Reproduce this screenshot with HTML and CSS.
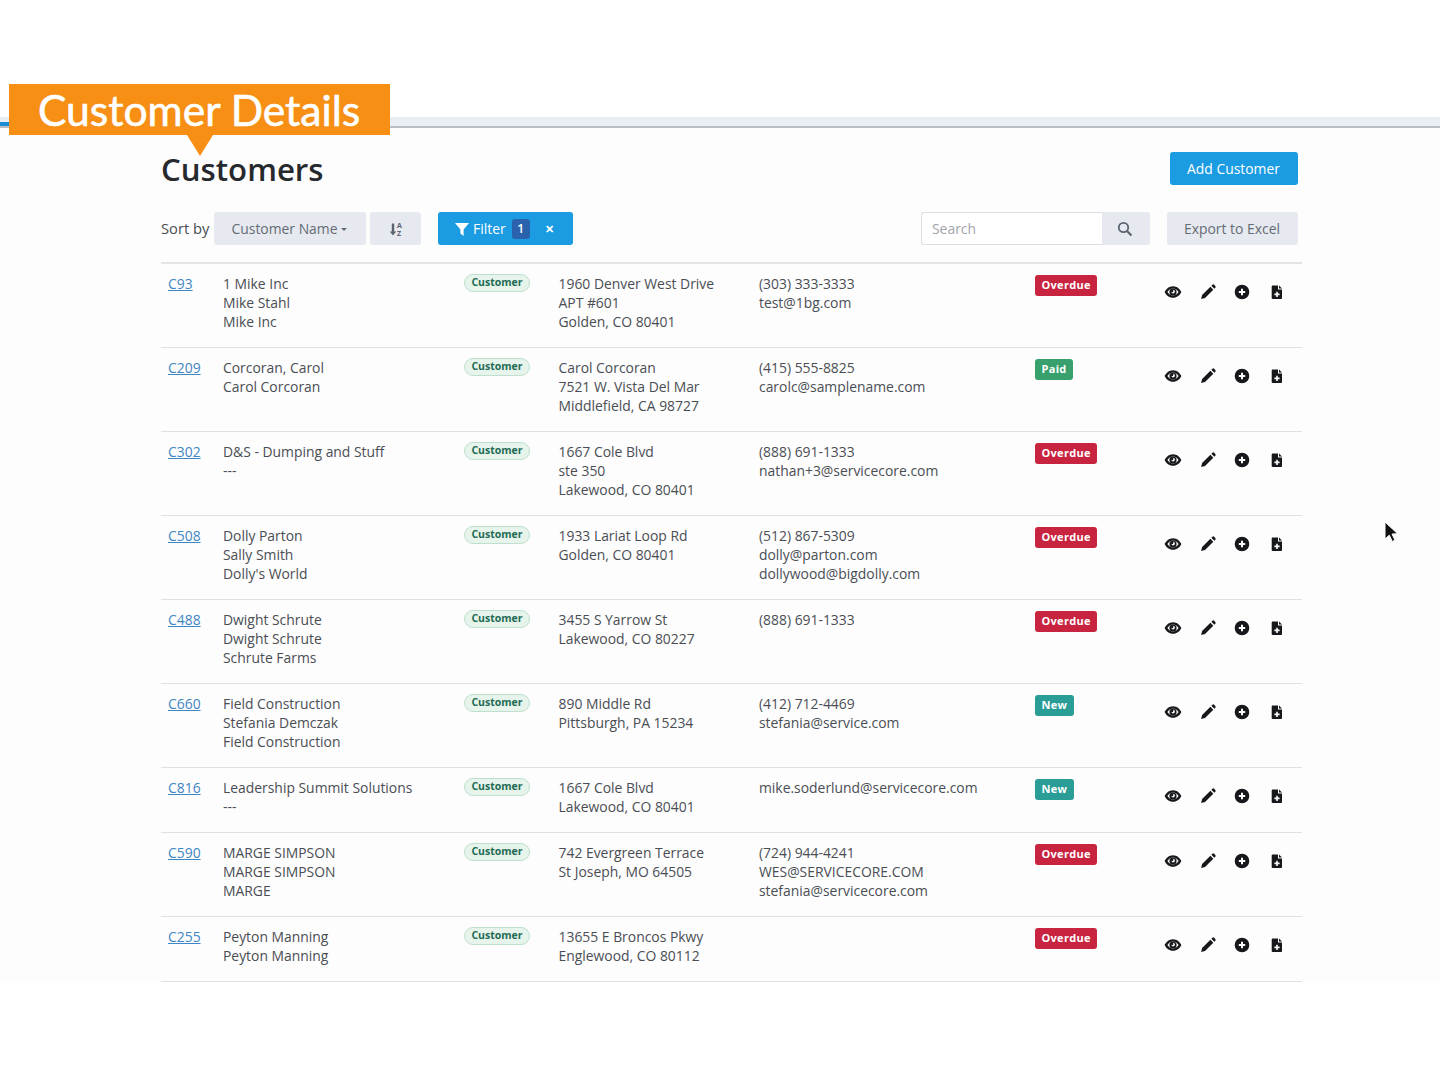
FILE: index.html
```html
<!DOCTYPE html>
<html lang="en">
<head>
<meta charset="utf-8">
<title>Customers</title>
<link rel="stylesheet" href="styles.css">
</head>
<body>
<svg class="defs" width="0" height="0" aria-hidden="true">
  <symbol id="i-eye" viewBox="0 0 18 18"><path fill-rule="evenodd" d="M9 3.200C5 3.200 2 6 .6 9c1.400 3 4.400 5.800 8.400 5.800s7-2.800 8.400-5.800C16 6 13 3.200 9 3.200zm0 2.200c2.400 0 4.500 1.700 5.600 3.600-1.100 1.900-3.200 3.600-5.600 3.600S4.500 10.900 3.400 9C4.500 7.100 6.600 5.400 9 5.400z"/><path fill-rule="evenodd" d="M9 5.400a3.600 3.600 0 1 0 0 7.200 3.600 3.600 0 0 0 0-7.200zm-.2 1.700a1.100 1.100 0 1 1-1.500 1.500c.1 1 .800 1.900 1.700 1.900a1.900 1.900 0 0 0 0-3.800z"/></symbol>
  <symbol id="i-pencil" viewBox="0 0 18 18"><path d="M11.400 3.800l2.900 2.900-8.300 8.300-3.900 1 1-3.900zM12.400 2.800l1-1a1.300 1.300 0 0 1 1.800 0l1.100 1.100a1.300 1.300 0 0 1 0 1.800l-1 1z"/></symbol>
  <symbol id="i-plus" viewBox="0 0 18 18"><path fill-rule="evenodd" d="M9 1.700a7.300 7.300 0 1 0 0 14.600A7.300 7.300 0 0 0 9 1.700zm-1 4.100h2V8h2.200v2H10v2.200H8V10H5.800V8H8z"/></symbol>
  <symbol id="i-file" viewBox="0 0 18 18"><path fill-rule="evenodd" d="M4.800 2.500h5.200v4h4v8.400c0 .6-.5 1.100-1.100 1.100H4.800c-.6 0-1.100-.5-1.100-1.100V3.600c0-.6.500-1.100 1.100-1.100zm3.400 6.300v1.800H6.400v1.600h1.800V14h1.600v-1.800h1.800v-1.600H9.800V8.800zM11 2.500l3 3h-3z"/></symbol>
</svg>

<div class="blank-top"></div>
<div class="callout">Customer Details</div>
<svg class="cursor" width="16" height="24" viewBox="0 0 16 24" aria-hidden="true"><path d="M2 1v17l4.300-3.800 3 6.300 2.700-1.300-3-6.100 5.600-.4z" fill="#111" stroke="#fff" stroke-width="1"/></svg>

<main class="app">
  <div class="app-bar"></div>
  <div class="content">
    <header class="title-row">
      <h1 class="title">Customers</h1>
      <button class="btn btn-primary btn-add">Add Customer</button>
    </header>
    <div class="toolbar">
      <div class="toolbar-left">
        <span class="sort-label">Sort by</span>
        <button class="btn btn-muted btn-sort">Customer Name<span class="caret"></span></button>
        <button class="btn btn-muted btn-order" aria-label="Sort order">
          <svg width="16" height="16" viewBox="0 0 16 16"><path d="M3.800 2.500h2.400v8h2l-3.200 4-3.200-4h2z" fill="#5b6470"/><text x="9" y="7.200" class="az">A</text><text x="9" y="14.500" class="az">Z</text></svg>
        </button>
        <button class="btn btn-primary btn-filter">
          <svg width="14" height="14" viewBox="0 0 14 14"><path d="M0 1h14L8.600 7.500V14L5.400 11.500V7.500z" fill="#fff"/></svg>
          <span>Filter</span><span class="count">1</span><span class="close">✕</span>
        </button>
      </div>
      <div class="toolbar-right">
        <div class="search">
          <input class="search-input" type="text" placeholder="Search">
          <button class="btn-search" aria-label="Search">
            <svg width="16" height="16" viewBox="0 0 16 16"><circle cx="6.500" cy="6.500" r="4.700" fill="none" stroke="#5b6470" stroke-width="1.800"/><path d="M10 10l4.500 4.500" stroke="#5b6470" stroke-width="2.200"/></svg>
          </button>
        </div>
        <button class="btn btn-muted btn-export">Export to Excel</button>
      </div>
    </div>

    <div class="rows">
      <div class="row">
        <a class="id" href="#">C93</a>
        <div>1 Mike Inc<br>Mike Stahl<br>Mike Inc</div>
        <div><span class="pill">Customer</span></div>
        <div>1960 Denver West Drive<br>APT #601<br>Golden, CO 80401</div>
        <div>(303) 333-3333<br>test@1bg.com</div>
        <div><span class="status overdue">Overdue</span></div>
        <div class="actions"><svg><use href="#i-eye"/></svg><svg><use href="#i-pencil"/></svg><svg><use href="#i-plus"/></svg><svg><use href="#i-file"/></svg></div>
      </div>
      <div class="row">
        <a class="id" href="#">C209</a>
        <div>Corcoran, Carol<br>Carol Corcoran</div>
        <div><span class="pill">Customer</span></div>
        <div>Carol Corcoran<br>7521 W. Vista Del Mar<br>Middlefield, CA 98727</div>
        <div>(415) 555-8825<br>carolc@samplename.com</div>
        <div><span class="status paid">Paid</span></div>
        <div class="actions"><svg><use href="#i-eye"/></svg><svg><use href="#i-pencil"/></svg><svg><use href="#i-plus"/></svg><svg><use href="#i-file"/></svg></div>
      </div>
      <div class="row">
        <a class="id" href="#">C302</a>
        <div>D&amp;S - Dumping and Stuff<br>---</div>
        <div><span class="pill">Customer</span></div>
        <div>1667 Cole Blvd<br>ste 350<br>Lakewood, CO 80401</div>
        <div>(888) 691-1333<br>nathan+3@servicecore.com</div>
        <div><span class="status overdue">Overdue</span></div>
        <div class="actions"><svg><use href="#i-eye"/></svg><svg><use href="#i-pencil"/></svg><svg><use href="#i-plus"/></svg><svg><use href="#i-file"/></svg></div>
      </div>
      <div class="row">
        <a class="id" href="#">C508</a>
        <div>Dolly Parton<br>Sally Smith<br>Dolly's World</div>
        <div><span class="pill">Customer</span></div>
        <div>1933 Lariat Loop Rd<br>Golden, CO 80401</div>
        <div>(512) 867-5309<br>dolly@parton.com<br>dollywood@bigdolly.com</div>
        <div><span class="status overdue">Overdue</span></div>
        <div class="actions"><svg><use href="#i-eye"/></svg><svg><use href="#i-pencil"/></svg><svg><use href="#i-plus"/></svg><svg><use href="#i-file"/></svg></div>
      </div>
      <div class="row">
        <a class="id" href="#">C488</a>
        <div>Dwight Schrute<br>Dwight Schrute<br>Schrute Farms</div>
        <div><span class="pill">Customer</span></div>
        <div>3455 S Yarrow St<br>Lakewood, CO 80227</div>
        <div>(888) 691-1333</div>
        <div><span class="status overdue">Overdue</span></div>
        <div class="actions"><svg><use href="#i-eye"/></svg><svg><use href="#i-pencil"/></svg><svg><use href="#i-plus"/></svg><svg><use href="#i-file"/></svg></div>
      </div>
      <div class="row">
        <a class="id" href="#">C660</a>
        <div>Field Construction<br>Stefania Demczak<br>Field Construction</div>
        <div><span class="pill">Customer</span></div>
        <div>890 Middle Rd<br>Pittsburgh, PA 15234</div>
        <div>(412) 712-4469<br>stefania@service.com</div>
        <div><span class="status new">New</span></div>
        <div class="actions"><svg><use href="#i-eye"/></svg><svg><use href="#i-pencil"/></svg><svg><use href="#i-plus"/></svg><svg><use href="#i-file"/></svg></div>
      </div>
      <div class="row">
        <a class="id" href="#">C816</a>
        <div>Leadership Summit Solutions<br>---</div>
        <div><span class="pill">Customer</span></div>
        <div>1667 Cole Blvd<br>Lakewood, CO 80401</div>
        <div>mike.soderlund@servicecore.com</div>
        <div><span class="status new">New</span></div>
        <div class="actions"><svg><use href="#i-eye"/></svg><svg><use href="#i-pencil"/></svg><svg><use href="#i-plus"/></svg><svg><use href="#i-file"/></svg></div>
      </div>
      <div class="row">
        <a class="id" href="#">C590</a>
        <div>MARGE SIMPSON<br>MARGE SIMPSON<br>MARGE</div>
        <div><span class="pill">Customer</span></div>
        <div>742 Evergreen Terrace<br>St Joseph, MO 64505</div>
        <div>(724) 944-4241<br>WES@SERVICECORE.COM<br>stefania@servicecore.com</div>
        <div><span class="status overdue">Overdue</span></div>
        <div class="actions"><svg><use href="#i-eye"/></svg><svg><use href="#i-pencil"/></svg><svg><use href="#i-plus"/></svg><svg><use href="#i-file"/></svg></div>
      </div>
      <div class="row">
        <a class="id" href="#">C255</a>
        <div>Peyton Manning<br>Peyton Manning</div>
        <div><span class="pill">Customer</span></div>
        <div>13655 E Broncos Pkwy<br>Englewood, CO 80112</div>
        <div></div>
        <div><span class="status overdue">Overdue</span></div>
        <div class="actions"><svg><use href="#i-eye"/></svg><svg><use href="#i-pencil"/></svg><svg><use href="#i-plus"/></svg><svg><use href="#i-file"/></svg></div>
      </div>
    </div>
  </div>
</main>
</body>
</html>
```
FILE: styles.css
```css
* { box-sizing: border-box; }
html, body { margin: 0; padding: 0; background: #fff; }
body {
  position: relative;
  height: 1066px;
  overflow: hidden;
  font-family: "Open Sans", "Liberation Sans", sans-serif;
  font-size: 13.900px;
  line-height: 19px;
  color: #4a4e54;
}
.defs { position: absolute; }
.blank-top { height: 117px; }

.callout {
  position: absolute;
  left: 9px;
  top: 84px;
  width: 381px;
  height: 51px;
  padding-left: 29px;
  background: #f78f14;
  color: #fff;
  font-family: "Lato", "Open Sans", sans-serif;
  font-size: 42.600px;
  line-height: 52px;
  font-weight: 400;
  -webkit-text-stroke: 0.600px #fff;
  z-index: 3;
}
.callout::after {
  content: "";
  position: absolute;
  left: 178px;
  top: 51px;
  border-left: 13px solid transparent;
  border-right: 13px solid transparent;
  border-top: 21px solid #f78f14;
}
.cursor { position: absolute; left: 1383px; top: 521px; z-index: 3; }

.app { background: #fdfdfd; height: 865px; }
.app-bar {
  position: relative;
  height: 11px;
  background: #eaedf2;
  border-bottom: 2px solid #b9bec6;
}
.app-bar::before {
  content: "";
  position: absolute;
  left: 0;
  top: 5px;
  width: 9px;
  height: 4px;
  background: #1a8fd6;
}
.content { margin-left: 161px; width: 1141px; padding-top: 24px; }

.title-row {
  display: flex;
  justify-content: space-between;
  align-items: center;
  height: 33px;
  padding-right: 4px;
}
.title {
  margin: 0;
  font-size: 31.200px;
  line-height: 36px;
  font-weight: 600;
  color: #26292d;
}
.btn {
  display: inline-flex;
  align-items: center;
  justify-content: center;
  height: 33px;
  padding: 0;
  border: 0;
  border-radius: 3px;
  font-family: inherit;
  font-size: 13.900px;
}
.btn-primary { background: #1a9be2; color: #fff; }
.btn-muted { background: #e6e9f0; color: #656b74; }
.btn-add { width: 128px; padding-right: 1px; }

.toolbar {
  display: flex;
  justify-content: space-between;
  margin-top: 27px;
  height: 52px;
  padding-right: 4px;
  border-bottom: 2px solid #e4e5e7;
}
.toolbar-left, .toolbar-right { display: flex; height: 33px; align-items: center; }
.sort-label { width: 53px; color: #4a4e54; font-size: 14.700px; }
.btn-sort { width: 152px; padding-right: 1px; }
.caret {
  margin-left: 4px;
  margin-top: 2px;
  border-left: 3.500px solid transparent;
  border-right: 3.500px solid transparent;
  border-top: 3.500px solid #656b74;
}
.btn-order { width: 51px; margin-left: 4px; }
.az { font-size: 7px; font-weight: 700; fill: #5b6470; }
.btn-filter { width: 135px; margin-left: 17px; justify-content: flex-start; padding-left: 17px; gap: 4px; }
.count {
  width: 18px;
  height: 20px;
  margin-left: 2px;
  background: #2a62ad;
  border-radius: 3px;
  font-size: 12px;
  font-weight: 600;
  line-height: 20px;
  text-align: center;
}
.close { margin-left: 11px; font-size: 11px; font-weight: 600; }

.search { display: flex; width: 229px; height: 33px; }
.search-input {
  width: 181px;
  height: 33px;
  padding: 0 10px;
  border: 1px solid #dcdee1;
  border-right: 0;
  border-radius: 3px 0 0 3px;
  background: #fff;
  font-family: inherit;
  font-size: 13.900px;
  outline: none;
}
.search-input::placeholder { color: #a2a5aa; opacity: 1; }
.btn-search {
  display: flex;
  align-items: center;
  justify-content: center;
  width: 48px;
  height: 33px;
  padding: 0 2px 0 0;
  border: 0;
  border-radius: 0 3px 3px 0;
  background: #e6e9f0;
}
.btn-export { width: 131px; margin-left: 17px; padding-right: 1px; }

.row {
  display: grid;
  grid-template-columns: 62px 241px 94.500px 200.500px 276px 130px 137px;
  padding: 10px 0 16px;
  border-bottom: 1px solid #e0e1e3;
}
.id {
  padding-left: 7px;
  color: #3f86c4;
  text-decoration: underline;
}
.pill {
  display: inline-block;
  width: 66px;
  height: 18px;
  border: 1px solid #bfe0cd;
  border-radius: 9px;
  background: #e7f4ec;
  color: #1f6b54;
  font-size: 10.500px;
  font-weight: 700;
  line-height: 15px;
  text-align: center;
  vertical-align: top;
}
.status {
  display: inline-block;
  height: 21px;
  margin-top: 1px;
  padding: 0 6.500px;
  border-radius: 3px;
  color: #fff;
  font-size: 11px;
  font-weight: 700;
  line-height: 20px;
  letter-spacing: 0.300px;
  vertical-align: top;
}
.overdue { background: #c8243f; }
.paid { background: #37a06c; }
.new { background: #2a9d96; }

.actions { display: flex; gap: 16.700px; padding-top: 9px; height: 27px; margin-left: -1px; }
.actions svg { width: 18px; height: 18px; fill: #16181b; }
```
